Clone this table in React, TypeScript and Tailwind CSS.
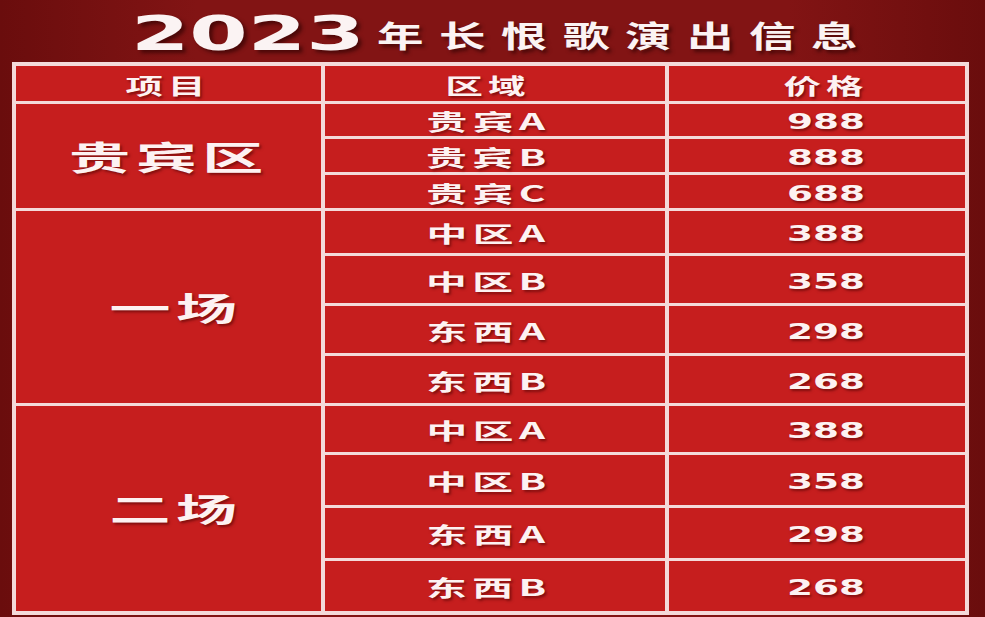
import React from "react";

const cjk = "font-['Noto_Sans_CJK_SC','Noto_Sans',sans-serif] font-bold";
const num = "font-['DejaVu_Sans',sans-serif] font-bold";
const shadow = "[text-shadow:1px_2px_2px_rgba(70,0,0,0.55)]";

const cell = "bg-[#c61e1e] flex items-center justify-center";

function Head({ t }: { t: string }) {
  return (
    <span className={`${cjk} ${shadow} inline-block text-[22px] leading-none tracking-[3px] scale-x-[1.7] text-[#fdf2f2] whitespace-nowrap`}>
      {t}
    </span>
  );
}

function Zone({ t }: { t: string }) {
  return (
    <span className={`${cjk} ${shadow} inline-block text-[22px] leading-none tracking-[3px] scale-x-[1.85] text-[#fdf2f2] whitespace-nowrap`}>
      {t}
    </span>
  );
}

function Price({ t }: { t: string }) {
  return (
    <span className={`${num} ${shadow} inline-block text-[22px] leading-none scale-x-[1.7] translate-y-[2px] text-[#fdf2f2] whitespace-nowrap`}>
      {t}
    </span>
  );
}

function Big({ t }: { t: string }) {
  return (
    <span className={`${cjk} ${shadow} inline-block text-[33px] leading-none tracking-[3px] scale-x-[1.85] text-[#fdf2f2] whitespace-nowrap`}>
      {t}
    </span>
  );
}

const rows: [string, string][] = [
  ["贵宾A", "988"],
  ["贵宾B", "888"],
  ["贵宾C", "688"],
  ["中区A", "388"],
  ["中区B", "358"],
  ["东西A", "298"],
  ["东西B", "268"],
  ["中区A", "388"],
  ["中区B", "358"],
  ["东西A", "298"],
  ["东西B", "268"],
];

export default function App() {
  return (
    <div className="w-[985px] h-[617px] overflow-hidden bg-[#7a1212] bg-[linear-gradient(90deg,#6a0d0d_0%,#821414_20%,#821414_80%,#6a0d0d_100%)]">
      <div className="h-[62px] flex items-baseline justify-center pt-[9px] pr-[19px]">
        <span className={`${num} [text-shadow:2px_3px_3px_rgba(40,0,0,0.6)] inline-block text-[48px] leading-none scale-x-[1.75] text-[#fbf3f3] mr-[50px]`}>
          2023
        </span>
        <span className={`${cjk} [text-shadow:2px_3px_3px_rgba(40,0,0,0.6)] inline-block text-[30px] leading-none tracking-[10px] scale-x-[1.55] -translate-y-[3px] text-[#fbf3f3] ml-[100px]`}>
          年长恨歌演出信息
        </span>
      </div>
      <div className="ml-[12px] w-[957px] border-4 border-[#f4dada] bg-[#f4dada] grid grid-cols-[305px_340px_296px] grid-rows-[35px_32px_33px_33px_42px_47px_47px_47px_46px_50px_50px_50px] gap-x-[4px] gap-y-[3px]">
        <div className={cell}>
          <Head t="项目" />
        </div>
        <div className={`${cell} pr-[14px]`}>
          <Head t="区域" />
        </div>
        <div className={`${cell} pl-[18px]`}>
          <Head t="价格" />
        </div>

        <div className={`${cell} row-span-3 col-start-1 row-start-2`}>
          <Big t="贵宾区" />
        </div>
        <div className={`${cell} row-span-4 col-start-1 row-start-5 pl-[14px]`}>
          <Big t="一场" />
        </div>
        <div className={`${cell} row-span-4 col-start-1 row-start-9 pl-[14px]`}>
          <Big t="二场" />
        </div>

        {rows.map(([z, p], i) => (
          <React.Fragment key={i}>
            <div className={`${cell} col-start-2 pr-[12px]`} style={{ gridRowStart: i + 2 }}>
              <Zone t={z} />
            </div>
            <div className={`${cell} col-start-3 pl-[18px]`} style={{ gridRowStart: i + 2 }}>
              <Price t={p} />
            </div>
          </React.Fragment>
        ))}
      </div>
    </div>
  );
}
